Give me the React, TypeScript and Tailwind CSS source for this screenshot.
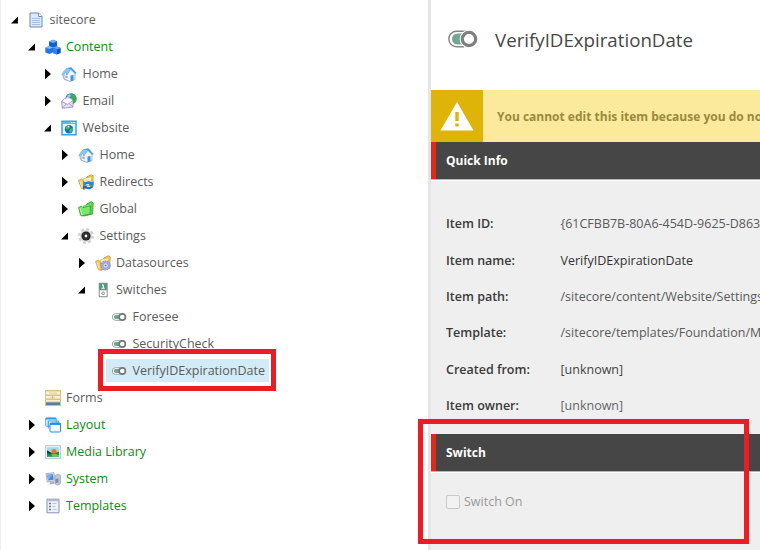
import React from "react";

type IconName =
  | "doc" | "cubes" | "home" | "email" | "site" | "redirect" | "global" | "gear"
  | "data" | "switches" | "toggle" | "forms" | "layout" | "media" | "system" | "templates";

function House() {
  return (
    <>
      <circle cx="7" cy="9" r="6" fill="#b9dcf3" />
      <path d="M3 7.500v5.500l6 2.500 5-2V7l-4-3.500z" fill="#f3f4f5" stroke="#8d97a1" strokeWidth=".7" />
      <path d="M.4 8.400L5.600 2l4.800-.7L15.700 7l-1.600.8-4.300-4.300-4 6.200L4.500 6.200 1.500 9z" fill="#4f9fdd" />
      <path d="M5.600 2l4.200 1.500L6 8.500 4.500 6.200 1.500 9 .4 8.400z" fill="#8cc5ef" />
      <path d="M9.500 9.500l3-.5v5.300l-3 .9z" fill="#2c9be8" />
      <path d="M4.300 9.500l2.400.4v2.400l-2.400-.5z" fill="#9fb3c2" />
    </>
  );
}

function Folder({ green = false }: { green?: boolean }) {
  const line = green ? "#28a428" : "#c9962b";
  return (
    <>
      <path d="M9 2.800L13.300.8l1.900 1-.6 11.200-9.200 2z" fill={green ? "#7fe06e" : "#f3d27a"} stroke={line} strokeWidth=".9" />
      <path d="M5.500 4.800l8.300-2.300-.8 10.500-7 2z" fill={green ? "#a5f08d" : "#fdeeb5"} stroke={line} strokeWidth=".5" />
      {green ? (
        <path d="M.6 6.400l3-1.200 1.400 1.400 7.600-2-.6 8.400-8.500 2L2.500 14z" fill="#7de66c" stroke={line} strokeWidth=".9" />
      ) : (
        <path d="M.6 6.400l3-1.200 1.700 1.600 1.200 8.400-3-.6z" fill="#f4cf68" stroke={line} strokeWidth=".9" />
      )}
      <path d="M2 7.300l2 6.500" fill="none" stroke="#fff" strokeOpacity=".6" />
    </>
  );
}

function Toggle() {
  return (
    <>
      <path d="M9.500 4.700H4.600a3.300 3.300 0 0 0 0 6.600h4.900" fill="#fff" stroke="#9a9a9a" strokeWidth=".9" />
      <path d="M8 6H4.900a2 2 0 0 0 0 4H8z" fill="#68a791" />
      <circle cx="11.300" cy="8" r="3.100" fill="#fff" stroke="#757575" strokeWidth="1.600" />
    </>
  );
}

function Icon({ name }: { name: IconName }) {
  return (
    <svg viewBox="0 0 16 16" className="size-4 shrink-0 overflow-visible">
      {name === "doc" && (
        <>
          <path d="M2 1h8.500L14 4.500V15H2z" fill="#dfe9f8" stroke="#7188b0" />
          <path d="M10.500 1v3.500H14" fill="#fff" stroke="#7188b0" />
          <path d="M4 6.500h8M4 8.500h8M4 10.500h8M4 12.500h8" stroke="#a9bfe2" />
        </>
      )}
      {name === "cubes" && (
        <>
          <path d="M4 2.500l4-1.700 4 1.400v5l-4 1.600-4-1.500z" fill="#1560cf" />
          <path d="M4 2.500l4-1.700 4 1.400L8.200 4z" fill="#72b3ff" />
          <path d="M.3 8.700l3.700-1.600 4 1.500v5L4.300 15 .3 13.500z" fill="#2476e5" />
          <path d="M.3 8.700l3.700-1.600 4 1.500-3.700 1.500z" fill="#80b9fa" />
          <path d="M8 9l3.800-1.500L15.700 9v5L12 15.500 8 14z" fill="#0e50b9" />
          <path d="M8 9l3.800-1.500L15.700 9 12 10.500z" fill="#62a4f4" />
          <path d="M8 9l4 1.500v5L8 14z" fill="#2d82ec" />
        </>
      )}
      {name === "home" && <House />}
      {name === "email" && (
        <>
          <circle cx="10" cy="5.800" r="5.600" fill="#2585cf" />
          <path d="M10 .5c3-.2 5.500 2.500 5.600 5.300 0 2-1.300 4-3 5L11 8l1.500-2L9.500 4z" fill="#39ad47" />
          <path d="M6 3l3-2 1 2-2.500 2z" fill="#8ed5ee" />
          <path d="M.7 8L6.500 3.500 12 6.800V14l-10.800 1.300z" fill="#e7e1fb" stroke="#9286be" strokeWidth=".8" />
          <path d="M2.500 6.500l7.500-.8.500 3.300-4 2.200L3 9z" fill="#fff" />
          <path d="M.8 8.500l5.700 3L12 7.500M1.300 15l4-4.200M12 13.800l-4-3.200" fill="none" stroke="#9286be" strokeWidth=".7" />
        </>
      )}
      {name === "site" && (
        <>
          <rect x="1" y="1.200" width="14" height="13.600" fill="#e4f5ff" stroke="#299dec" strokeWidth="1.400" />
          <path d="M1 3h14" stroke="#4db3f5" strokeWidth="1.800" />
          <path d="M10 2.600h4" stroke="#fff" strokeDasharray="1 .6" />
          <circle cx="8" cy="9.200" r="4.200" fill="#2368bf" />
          <path d="M5 6.500l3-1 1 2-2 2-2.300-.5zM9 9l3-1.500v3L9.500 13 8 11.500z" fill="#43b75a" />
          <path d="M6.500 6l1.500-.3.500 1-1.500 1z" fill="#d5f7df" />
        </>
      )}
      {name === "redirect" && (
        <>
          <Folder />
          <path d="M5.500 7.500l2 .8c2-1.500 4.500-1.200 6.500.2l1.600-1.400v4.700H10l1.500-1.500c-1.500-.7-3-.3-4 .6H5.500z" fill="#2384da" />
          <path d="M5 11.500h5l-1.500 1.400c1.500.6 3.200.4 4.300-.6h2.700c-1.500 3-5.700 3.900-8.600 1.800L5 15.500z" fill="#1469be" />
        </>
      )}
      {name === "global" && <Folder green />}
      {name === "gear" && (
        <>
          <circle cx="8" cy="8" r="6.600" fill="none" stroke="#d0d0d0" strokeWidth="2.600" strokeDasharray="2.900 2.284" />
          <circle cx="8" cy="8" r="5.900" fill="#d9d9d9" />
          <circle cx="8" cy="8" r="4.600" fill="#222" />
          <circle cx="8" cy="8" r="3" fill="none" stroke="#444" strokeWidth=".6" />
          <circle cx="8" cy="8" r="1.400" fill="#f7f7f7" />
        </>
      )}
      {name === "data" && (
        <>
          <Folder />
          <circle cx="10.600" cy="10.500" r="4.500" fill="#aab2dc" stroke="#8d95c6" strokeWidth="1.200" strokeDasharray="1.500 .7" />
          <circle cx="10.600" cy="10.500" r="2.600" fill="#dce1f5" stroke="#858dc1" strokeWidth=".7" />
          <circle cx="10.600" cy="10.500" r="1" fill="#7780b6" />
        </>
      )}
      {name === "switches" && (
        <>
          <rect x="3.700" y=".8" width="9" height="14.400" rx="1" fill="#8b8b8b" />
          <path d="M4.700 1.800h7v5.700h-7z" fill="#469c80" />
          <path d="M4.700 8.300h7v5.900h-7z" fill="#fff" />
          <path d="M7 3.100h1.300v3M6.500 6.200h3.300" fill="none" stroke="#fff" strokeWidth="1.100" />
          <circle cx="8.200" cy="11.300" r="1.300" fill="none" stroke="#888" />
        </>
      )}
      {name === "toggle" && <Toggle />}
      {name === "forms" && (
        <>
          <path d="M0 0h16v16H0z" fill="#d9c18e" />
          <path d="M1 1.500h14V4.500H1zM1 6h6V8.500H1zM8 6h7V8.500H8zM1 10h14v1.500H1z" fill="#fff2d4" />
          <path d="M4 3h8M5 7.300h2M8 7.300h2" stroke="#d9c18e" strokeWidth=".8" />
          <path d="M1 12.500h14V15H1z" fill="#557ba6" />
        </>
      )}
      {name === "layout" && (
        <>
          <rect x=".7" y=".8" width="10.500" height="8.500" rx="1" fill="#dff3ff" stroke="#41a5e9" strokeWidth=".9" />
          <path d="M.7 1.700h10.500" stroke="#2d9ceb" strokeWidth="1.600" />
          <path d="M3.300 11.500V4h10v1.800" fill="none" stroke="#41a5e9" strokeWidth="1.200" />
          <rect x="5" y="6" width="10.500" height="9" rx="1" fill="#f2f9ff" stroke="#258fdf" />
          <path d="M5 7h10.500" stroke="#198be2" strokeWidth="1.800" />
        </>
      )}
      {name === "media" && (
        <>
          <rect x=".7" y="1.800" width="14.600" height="12.500" fill="#fff" stroke="#a9bbd8" />
          <path d="M2 3.200h12v9.600H2z" fill="#9fdcf2" />
          <circle cx="9" cy="7.500" r="2.600" fill="#f1722c" />
          <path d="M2 6.500l4 2.200 3 .9 5-2v5.200H2z" fill="#2a8743" />
          <path d="M2 6.500l3 1.500 2 2-5-.8z" fill="#173d32" />
          <path d="M6 10.500l4-.8 4 1.500v1.600H8z" fill="#78c64d" />
        </>
      )}
      {name === "system" && (
        <>
          <path d="M10.500 4l3-.8 2 1v8.500l-3 1.600-2-1z" fill="#c3c6d1" stroke="#9297a8" strokeWidth=".6" />
          <path d="M1 2.500l8-.8.800 8.300-7.600 1z" fill="#dbe1eb" stroke="#9aa3b9" strokeWidth=".8" />
          <path d="M2.200 3.700l5.800-.6.600 5.700-5.500.6z" fill="#4489da" />
          <path d="M2.200 3.700l5.800-.6-4.900 6.300z" fill="#75b3ef" />
          <path d="M5 11l4-.5 1.500 2-6 1z" fill="#abb3c4" />
          <path d="M10.500 8l3-.6v4.200l-3 .5z" fill="#7e8da9" />
        </>
      )}
      {name === "templates" && (
        <>
          <path d="M2 1.200h12v13.600H2z" fill="#eff1fa" stroke="#8790b3" />
          <path d="M2.500 2.500h11" stroke="#b4bbd5" strokeWidth="1.600" />
          <path d="M4 5.500h2M4 8.500h2M4 11.500h2" stroke="#6875a2" strokeWidth="1.300" />
          <path d="M7.500 5.500h4M7.500 8.500h3M7.500 11.500h4" stroke="#bcc2d8" />
        </>
      )}
    </svg>
  );
}

type Row = { label: string; icon: IconName; arrow?: "open" | "closed"; indent: string; green?: boolean; selected?: boolean };

const rows: Row[] = [
  { label: "sitecore", icon: "doc", arrow: "open", indent: "pl-[9px]" },
  { label: "Content", icon: "cubes", arrow: "open", indent: "pl-[25.5px]", green: true },
  { label: "Home", icon: "home", arrow: "closed", indent: "pl-[42px]" },
  { label: "Email", icon: "email", arrow: "closed", indent: "pl-[42px]" },
  { label: "Website", icon: "site", arrow: "open", indent: "pl-[42px]" },
  { label: "Home", icon: "home", arrow: "closed", indent: "pl-[59px]" },
  { label: "Redirects", icon: "redirect", arrow: "closed", indent: "pl-[59px]" },
  { label: "Global", icon: "global", arrow: "closed", indent: "pl-[59px]" },
  { label: "Settings", icon: "gear", arrow: "open", indent: "pl-[59px]" },
  { label: "Datasources", icon: "data", arrow: "closed", indent: "pl-[75.5px]" },
  { label: "Switches", icon: "switches", arrow: "open", indent: "pl-[75.5px]" },
  { label: "Foresee", icon: "toggle", indent: "pl-[92px]" },
  { label: "SecurityCheck", icon: "toggle", indent: "pl-[92px]" },
  { label: "VerifyIDExpirationDate", icon: "toggle", indent: "pl-[92px]", selected: true },
  { label: "Forms", icon: "forms", indent: "pl-[25.5px]" },
  { label: "Layout", icon: "layout", arrow: "closed", indent: "pl-[25.5px]", green: true },
  { label: "Media Library", icon: "media", arrow: "closed", indent: "pl-[25.5px]", green: true },
  { label: "System", icon: "system", arrow: "closed", indent: "pl-[25.5px]", green: true },
  { label: "Templates", icon: "templates", arrow: "closed", indent: "pl-[25.5px]", green: true },
];

function TreeRow({ row }: { row: Row }) {
  return (
    <div className={`flex h-[27px] items-center ${row.indent}`}>
      <svg viewBox="0 0 8 12" className="mr-[10px] h-3 w-2 shrink-0">
        {row.arrow === "open" && <path d="M8 2.500v7H1z" fill="#000" />}
        {row.arrow === "closed" && <path d="M2 .8v10.400L8 6z" fill="#000" />}
      </svg>
      <div className={`-ml-[5px] flex h-[23px] items-center gap-[5.5px] pr-[4px] pl-[5px] ${row.selected ? "bg-[#d2ebf6]" : ""}`}>
        <Icon name={row.icon} />
        <span className={`text-[12.5px] leading-[23px] whitespace-nowrap ${row.green ? "text-[#138a13]" : "text-[#5b5b5b]"}`}>
          {row.label}
        </span>
      </div>
    </div>
  );
}

const fields = [
  { label: "Item ID:", value: "{61CFBB7B-80A6-454D-9625-D863", tone: "text-[#5a5a5a]" },
  { label: "Item name:", value: "VerifyIDExpirationDate", tone: "text-[#333]" },
  { label: "Item path:", value: "/sitecore/content/Website/Settings", tone: "text-[#5a5a5a]" },
  { label: "Template:", value: "/sitecore/templates/Foundation/M", tone: "text-[#5a5a5a]" },
  { label: "Created from:", value: "[unknown]", tone: "text-[#444]" },
  { label: "Item owner:", value: "[unknown]", tone: "text-[#666]" },
];

function SectionBar({ title }: { title: string }) {
  return (
    <div className="h-[39px] shrink-0 border-b border-white bg-[#b5b5b5] pb-px">
      <div className="flex h-[37px] items-center border-l-[5px] border-[#de291d] bg-[#464646] pl-[10px] text-[12px] font-bold text-white">
        {title}
      </div>
    </div>
  );
}

export default function App() {
  return (
    <div className="relative flex h-[550px] w-[760px] overflow-hidden bg-white font-['Open_Sans',sans-serif]">
      <nav className="w-[428px] shrink-0 border-l border-[#eeeeee] pt-[6px]">
        {rows.map((row, i) => <TreeRow key={i} row={row} />)}
      </nav>
      <main className="flex w-[332px] flex-col overflow-hidden border-l-[3px] border-[#e5e5e5] bg-[#efefef]">
        <header className="flex h-[90px] shrink-0 items-start bg-white pt-[24px] pl-[17px]">
          <svg viewBox="0 0 30 30" className="size-[30px] shrink-0">
            <path d="M19 7.300H8.500a7.700 7.700 0 0 0 0 15.400H16" fill="#fff" stroke="#858585" strokeWidth="1.400" />
            <path d="M14 9.500H9.500a5.500 5.500 0 0 0 0 11H14a9 9 0 0 1 0-11z" fill="#70a896" />
            <circle cx="21" cy="15" r="9.300" fill="#fff" />
            <circle cx="21" cy="15" r="6.700" fill="#fff" stroke="#7f7f7f" strokeWidth="3.200" />
          </svg>
          <h1 className="ml-[17px] text-[18.7px] leading-[31px] whitespace-nowrap text-[#474747]">VerifyIDExpirationDate</h1>
        </header>
        <div className="flex h-[52px] shrink-0 bg-[#fbe99c]">
          <div className="flex w-[52px] shrink-0 items-center justify-center bg-[#dfb408]">
            <svg viewBox="0 0 34 30" className="h-[30px] w-[34px]">
              <path d="M17 1L33.500 29.500H.5z" fill="#fff" />
              <path d="M15.300 11h3.400v9h-3.400zM15.300 22.500h3.400v3h-3.400z" fill="#dfb408" />
            </svg>
          </div>
          <p className="pl-[14px] text-[12px] leading-[53px] font-bold whitespace-nowrap text-[#998a3c]">
            You cannot edit this item because you do no
          </p>
        </div>
        <SectionBar title="Quick Info" />
        <div className="h-[253px] shrink-0 pt-[25.5px] pl-[15px]">
          {fields.map((f) => (
            <div key={f.label} className="flex h-[36.4px] items-center whitespace-nowrap">
              <span className="w-[114.5px] shrink-0 text-[12.5px] font-semibold text-[#3a3a3a]">{f.label}</span>
              <span className={`text-[12.5px] ${f.tone}`}>{f.value}</span>
            </div>
          ))}
        </div>
        <SectionBar title="Switch" />
        <div className="flex items-center gap-[4px] pt-[20px] pl-[15px] text-[12.5px] text-[#999]">
          <span className="size-[14px] rounded-[2px] border border-[#c9c9c9] bg-[#f2f2f2]" />
          <span>Switch On</span>
        </div>
      </main>
      <div className="absolute top-[349px] left-[98px] h-[42px] w-[178px] border-[5px] border-[#ed1c24]" />
      <div className="absolute top-[419px] left-[418px] h-[125px] w-[331px] border-[5px] border-[#ed1c24]" />
    </div>
  );
}
